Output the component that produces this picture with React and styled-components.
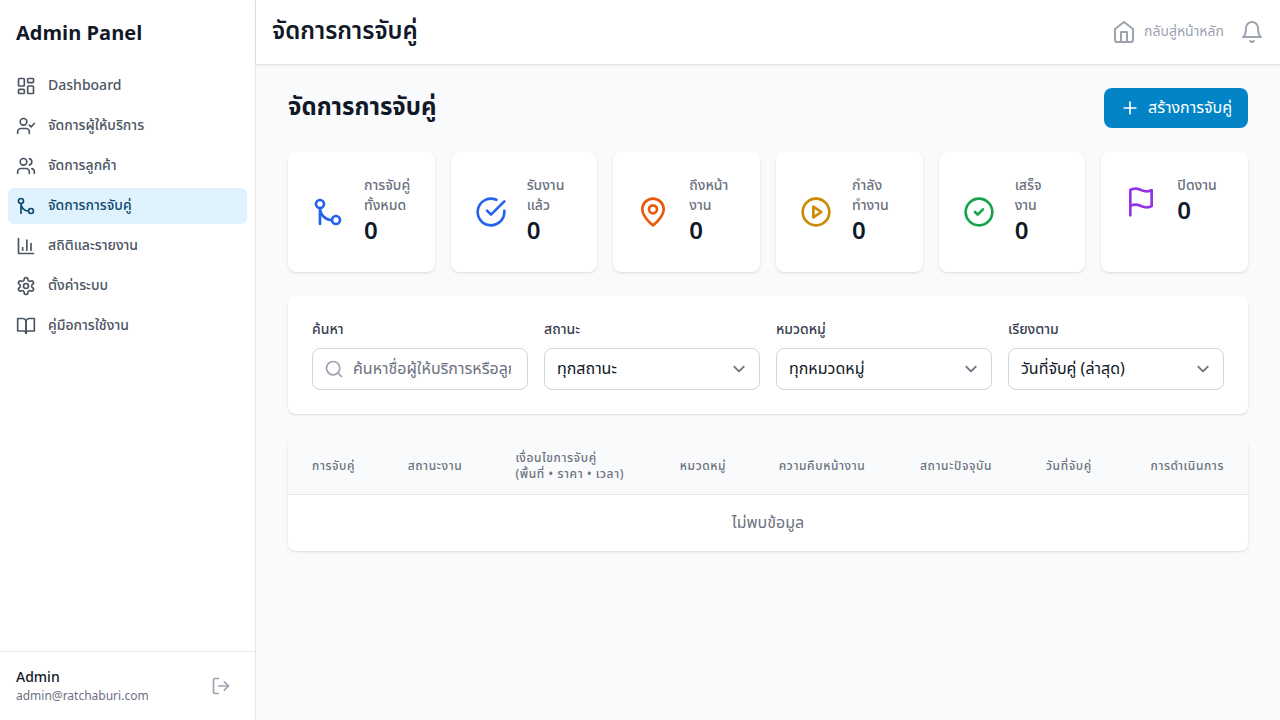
import React from "react";
import styled, { createGlobalStyle } from "styled-components";

const GlobalStyle = createGlobalStyle`
  *, *::before, *::after { box-sizing: border-box; }
  body { margin: 0; background: #f9fafb; }
  body, button, input, select {
    font-family: "Noto Sans Thai", "Noto Sans", sans-serif;
  }
  h1, h2, p { margin: 0; }
`;

const Svg = styled.svg`
  width: ${(p) => p.$size}px;
  height: ${(p) => p.$size}px;
  flex: none;
  display: block;
  fill: none;
  stroke: currentColor;
  stroke-width: 2;
  stroke-linecap: round;
  stroke-linejoin: round;
`;

const shapes = {
  dashboard: (
    <>
      <rect x="3" y="3" width="7" height="9" rx="1" />
      <rect x="14" y="3" width="7" height="5" rx="1" />
      <rect x="14" y="12" width="7" height="9" rx="1" />
      <rect x="3" y="16" width="7" height="5" rx="1" />
    </>
  ),
  userCheck: (
    <>
      <path d="M16 21v-2a4 4 0 0 0-4-4H6a4 4 0 0 0-4 4v2" />
      <circle cx="9" cy="7" r="4" />
      <path d="m16 11 2 2 4-4" />
    </>
  ),
  users: (
    <>
      <path d="M16 21v-2a4 4 0 0 0-4-4H6a4 4 0 0 0-4 4v2" />
      <circle cx="9" cy="7" r="4" />
      <path d="M22 21v-2a4 4 0 0 0-3-3.87" />
      <path d="M16 3.13a4 4 0 0 1 0 7.75" />
    </>
  ),
  merge: (
    <>
      <circle cx="18" cy="18" r="3" />
      <circle cx="6" cy="6" r="3" />
      <path d="M6 21V9a9 9 0 0 0 9 9" />
    </>
  ),
  chart: (
    <>
      <path d="M3 3v18h18" />
      <path d="M18 17V9" />
      <path d="M13 17V5" />
      <path d="M8 17v-3" />
    </>
  ),
  settings: (
    <>
      <path d="M12.22 2h-.44a2 2 0 0 0-2 2v.18a2 2 0 0 1-1 1.73l-.43.25a2 2 0 0 1-2 0l-.15-.08a2 2 0 0 0-2.73.73l-.22.38a2 2 0 0 0 .73 2.73l.15.1a2 2 0 0 1 1 1.72v.51a2 2 0 0 1-1 1.74l-.15.09a2 2 0 0 0-.73 2.73l.22.38a2 2 0 0 0 2.73.73l.15-.08a2 2 0 0 1 2 0l.43.25a2 2 0 0 1 1 1.73V20a2 2 0 0 0 2 2h.44a2 2 0 0 0 2-2v-.18a2 2 0 0 1 1-1.73l.43-.25a2 2 0 0 1 2 0l.15.08a2 2 0 0 0 2.73-.73l.22-.39a2 2 0 0 0-.73-2.73l-.15-.08a2 2 0 0 1-1-1.74v-.5a2 2 0 0 1 1-1.74l.15-.09a2 2 0 0 0 .73-2.73l-.22-.38a2 2 0 0 0-2.73-.73l-.15.08a2 2 0 0 1-2 0l-.43-.25a2 2 0 0 1-1-1.73V4a2 2 0 0 0-2-2z" />
      <circle cx="12" cy="12" r="3" />
    </>
  ),
  book: (
    <>
      <path d="M2 3h6a4 4 0 0 1 4 4v14a3 3 0 0 0-3-3H2z" />
      <path d="M22 3h-6a4 4 0 0 0-4 4v14a3 3 0 0 1 3-3h7z" />
    </>
  ),
  logout: (
    <>
      <path d="M9 21H5a2 2 0 0 1-2-2V5a2 2 0 0 1 2-2h4" />
      <path d="m16 17 5-5-5-5" />
      <path d="M21 12H9" />
    </>
  ),
  home: (
    <>
      <path d="m3 9 9-7 9 7v11a2 2 0 0 1-2 2H5a2 2 0 0 1-2-2z" />
      <path d="M9 22V12h6v10" />
    </>
  ),
  bell: (
    <>
      <path d="M6 8a6 6 0 0 1 12 0c0 7 3 9 3 9H3s3-2 3-9" />
      <path d="M10.3 21a1.94 1.94 0 0 0 3.4 0" />
    </>
  ),
  plus: <path d="M5 12h14M12 5v14" />,
  checkOpen: (
    <>
      <path d="M22 11.08V12a10 10 0 1 1-5.93-9.14" />
      <path d="m9 11 3 3L22 4" />
    </>
  ),
  pin: (
    <>
      <path d="M20 10c0 6-8 12-8 12s-8-6-8-12a8 8 0 0 1 16 0Z" />
      <circle cx="12" cy="10" r="3" />
    </>
  ),
  play: (
    <>
      <circle cx="12" cy="12" r="10" />
      <path d="m10 8 6 4-6 4V8z" />
    </>
  ),
  check: (
    <>
      <circle cx="12" cy="12" r="10" />
      <path d="m9 12 2 2 4-4" />
    </>
  ),
  flag: (
    <>
      <path d="M4 15s1-1 4-1 5 2 8 2 4-1 4-1V3s-1 1-4 1-5-2-8-2-4 1-4 1z" />
      <path d="M4 22v-7" />
    </>
  ),
  search: (
    <>
      <circle cx="11" cy="11" r="8" />
      <path d="m21 21-4.3-4.3" />
    </>
  ),
};

const Icon = ({ name, size = 20 }) => (
  <Svg viewBox="0 0 24 24" $size={size} aria-hidden="true">
    {shapes[name]}
  </Svg>
);

const Shell = styled.div`
  display: flex;
  height: 100vh;
  overflow: hidden;
  color: #111827;
  font-size: 16px;
  line-height: 24px;
`;

const Sidebar = styled.aside`
  display: flex;
  flex-direction: column;
  flex: none;
  width: 256px;
  background: #fff;
  border-right: 1px solid #e5e7eb;
`;

const Brand = styled.h1`
  padding: 20px 16px;
  font-size: 20px;
  line-height: 28px;
  font-weight: 700;
`;

const Nav = styled.nav`
  display: flex;
  flex: 1;
  flex-direction: column;
  gap: 4px;
  padding: 0 8px;
`;

const NavItem = styled.a`
  display: flex;
  align-items: center;
  gap: 12px;
  padding: 8px;
  border-radius: 6px;
  font-size: 14px;
  line-height: 20px;
  font-weight: 500;
  color: ${(p) => (p.$active ? "#0c4a6e" : "#4b5563")};
  background: ${(p) => (p.$active ? "#e0f2fe" : "transparent")};
`;

const Account = styled.div`
  display: flex;
  align-items: center;
  justify-content: space-between;
  padding: 16px;
  border-top: 1px solid #e5e7eb;
`;

const AccountName = styled.p`
  font-size: 14px;
  line-height: 20px;
  font-weight: 500;
`;

const AccountMail = styled.p`
  font-size: 12px;
  line-height: 16px;
  color: #6b7280;
`;

const IconButton = styled.button`
  padding: ${(p) => p.$pad || 0}px;
  border: 0;
  background: none;
  color: #9ca3af;
`;

const Column = styled.div`
  display: flex;
  flex: 1;
  flex-direction: column;
  min-width: 0;
`;

const Header = styled.header`
  display: flex;
  align-items: center;
  justify-content: space-between;
  flex: none;
  height: 64px;
  padding: 0 16px;
  background: #fff;
  box-shadow: 0 1px 3px rgba(0, 0, 0, 0.1), 0 1px 2px -1px rgba(0, 0, 0, 0.1);
`;

const HeaderTitle = styled.h2`
  font-size: 24px;
  line-height: 32px;
  font-weight: 600;
`;

const HeaderActions = styled.div`
  display: flex;
  align-items: center;
  gap: 16px;
`;

const HomeLink = styled.a`
  display: flex;
  align-items: center;
  gap: 8px;
  font-size: 14px;
  line-height: 20px;
  color: #9ca3af;
`;

const Content = styled.main`
  display: flex;
  flex-direction: column;
  gap: 24px;
  padding: 24px 32px;
`;

const TitleRow = styled.div`
  display: flex;
  align-items: center;
  justify-content: space-between;
`;

const PageTitle = styled.h1`
  font-size: 24px;
  line-height: 32px;
  font-weight: 700;
`;

const CreateButton = styled.button`
  display: flex;
  align-items: center;
  gap: 8px;
  height: 40px;
  padding: 8px 16px;
  border: 0;
  border-radius: 8px;
  background: #0284c7;
  color: #fff;
  font-size: 16px;
  line-height: 24px;
`;

const Card = styled.section`
  background: #fff;
  border-radius: 8px;
  box-shadow: 0 1px 3px rgba(0, 0, 0, 0.1), 0 1px 2px -1px rgba(0, 0, 0, 0.1);
`;

const Stats = styled.div`
  display: grid;
  grid-template-columns: repeat(6, minmax(0, 1fr));
  gap: 16px;
`;

const StatCard = styled(Card)`
  padding: 24px;
`;

const StatBody = styled.div`
  display: flex;
  align-items: center;
  gap: 20px;
  color: ${(p) => p.$color};
`;

const StatLabel = styled.p`
  font-size: 14px;
  line-height: 20px;
  font-weight: 500;
  color: #6b7280;
`;

const StatValue = styled.p`
  font-size: 24px;
  line-height: 32px;
  font-weight: 600;
  color: #111827;
`;

const Filters = styled(Card)`
  display: grid;
  grid-template-columns: repeat(4, minmax(0, 1fr));
  gap: 16px;
  padding: 24px;
`;

const Field = styled.label`
  display: flex;
  flex-direction: column;
  gap: 8px;
  font-size: 14px;
  line-height: 20px;
  font-weight: 500;
  color: #374151;
`;

const Control = styled.div`
  display: flex;
  align-items: center;
  gap: ${(p) => p.$gap || 0}px;
  height: 42px;
  padding: 0 ${(p) => p.$right}px 0 ${(p) => p.$left}px;
  border: 1px solid #d1d5db;
  border-radius: 8px;
  background: #fff;
  color: #9ca3af;
`;

const SearchInput = styled.input`
  flex: 1;
  min-width: 0;
  height: 40px;
  padding: 0;
  border: 0;
  outline: 0;
  background: transparent;
  font-size: 16px;
  line-height: 24px;
  color: #111827;
  &::placeholder { color: #6b7280; opacity: 1; }
`;

const SelectBox = styled.select`
  appearance: none;
  flex: 1;
  min-width: 0;
  height: 40px;
  padding: 0;
  border: 0;
  background: transparent;
  font-size: 16px;
  line-height: 24px;
  color: #111827;
`;

const Chevron = styled.svg`
  width: 24px;
  height: 24px;
  flex: none;
  fill: none;
  stroke: #6b7280;
  stroke-width: 1.5;
  stroke-linecap: round;
  stroke-linejoin: round;
`;

const TableCard = styled(Card)`
  overflow: hidden;
`;

const Table = styled.table`
  width: 100%;
  border-collapse: collapse;
`;

const Th = styled.th`
  padding: 12px 24px;
  background: #f9fafb;
  border-bottom: 1px solid #e5e7eb;
  font-size: 12px;
  line-height: 16px;
  font-weight: 500;
  letter-spacing: 0.6px;
  text-align: ${(p) => p.$align || "left"};
  color: #6b7280;
  white-space: nowrap;
`;

const EmptyCell = styled.td`
  padding: 16px 24px;
  text-align: center;
  font-size: 16px;
  line-height: 24px;
  color: #6b7280;
`;

const navItems = [
  ["dashboard", "Dashboard"],
  ["userCheck", "จัดการผู้ให้บริการ"],
  ["users", "จัดการลูกค้า"],
  ["merge", "จัดการการจับคู่"],
  ["chart", "สถิติและรายงาน"],
  ["settings", "ตั้งค่าระบบ"],
  ["book", "คู่มือการใช้งาน"],
];

const stats = [
  ["merge", "#2563eb", ["การจับคู่", "ทั้งหมด"]],
  ["checkOpen", "#2563eb", ["รับงาน", "แล้ว"]],
  ["pin", "#ea580c", ["ถึงหน้า", "งาน"]],
  ["play", "#ca8a04", ["กำลัง", "ทำงาน"]],
  ["check", "#16a34a", ["เสร็จ", "งาน"]],
  ["flag", "#9333ea", ["ปิดงาน"]],
];

const selects = [
  ["สถานะ", "ทุกสถานะ"],
  ["หมวดหมู่", "ทุกหมวดหมู่"],
  ["เรียงตาม", "วันที่จับคู่ (ล่าสุด)"],
];

const lines = (parts) =>
  parts.map((part, i) => (
    <React.Fragment key={part}>
      {i > 0 && <br />}
      {part}
    </React.Fragment>
  ));

export default function App() {
  return (
    <Shell>
      <GlobalStyle />
      <Sidebar>
        <Brand>Admin Panel</Brand>
        <Nav>
          {navItems.map(([icon, label]) => (
            <NavItem key={label} $active={icon === "merge"}>
              <Icon name={icon} />
              {label}
            </NavItem>
          ))}
        </Nav>
        <Account>
          <div>
            <AccountName>Admin</AccountName>
            <AccountMail>admin@ratchaburi.com</AccountMail>
          </div>
          <IconButton $pad={8} aria-label="ออกจากระบบ">
            <Icon name="logout" />
          </IconButton>
        </Account>
      </Sidebar>
      <Column>
        <Header>
          <HeaderTitle>จัดการการจับคู่</HeaderTitle>
          <HeaderActions>
            <HomeLink>
              <Icon name="home" size={24} />
              กลับสู่หน้าหลัก
            </HomeLink>
            <IconButton aria-label="การแจ้งเตือน">
              <Icon name="bell" size={24} />
            </IconButton>
          </HeaderActions>
        </Header>
        <Content>
          <TitleRow>
            <PageTitle>จัดการการจับคู่</PageTitle>
            <CreateButton>
              <Icon name="plus" />
              สร้างการจับคู่
            </CreateButton>
          </TitleRow>
          <Stats>
            {stats.map(([icon, color, label]) => (
              <StatCard key={label[0]}>
                <StatBody $color={color}>
                  <Icon name={icon} size={32} />
                  <div>
                    <StatLabel>{lines(label)}</StatLabel>
                    <StatValue>0</StatValue>
                  </div>
                </StatBody>
              </StatCard>
            ))}
          </Stats>
          <Filters>
            <Field>
              ค้นหา
              <Control $left={11} $right={16} $gap={9}>
                <Icon name="search" />
                <SearchInput placeholder="ค้นหาชื่อผู้ให้บริการหรือลูกค้า..." />
              </Control>
            </Field>
            {selects.map(([label, value]) => (
              <Field key={label}>
                {label}
                <Control $left={12} $right={8}>
                  <SelectBox>
                    <option>{value}</option>
                  </SelectBox>
                  <Chevron viewBox="0 0 20 20" aria-hidden="true">
                    <path d="m6 8 4 4 4-4" />
                  </Chevron>
                </Control>
              </Field>
            ))}
          </Filters>
          <TableCard>
            <Table>
              <thead>
                <tr>
                  <Th>การจับคู่</Th>
                  <Th>สถานะงาน</Th>
                  <Th>{lines(["เงื่อนไขการจับคู่", "(พื้นที่ • ราคา • เวลา)"])}</Th>
                  <Th>หมวดหมู่</Th>
                  <Th>ความคืบหน้างาน</Th>
                  <Th>สถานะปัจจุบัน</Th>
                  <Th>วันที่จับคู่</Th>
                  <Th $align="right">การดำเนินการ</Th>
                </tr>
              </thead>
              <tbody>
                <tr>
                  <EmptyCell colSpan={8}>ไม่พบข้อมูล</EmptyCell>
                </tr>
              </tbody>
            </Table>
          </TableCard>
        </Content>
      </Column>
    </Shell>
  );
}
